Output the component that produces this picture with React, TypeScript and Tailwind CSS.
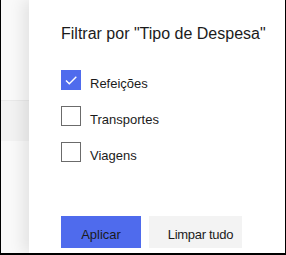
import React, { useState } from 'react';

const options = ['Refeições', 'Transportes', 'Viagens'];

function Checkbox({ checked }: { checked: boolean }) {
    return checked ? (
        <div className="w-[20px] h-[20px] bg-[#4f6bed] flex items-center justify-center shrink-0">
            <svg width="20" height="20" viewBox="0 0 20 20" fill="none">
                <path d="M5 10.5 L8.3 13.8 L15.3 6.8" stroke="white" strokeWidth="1.4" />
            </svg>
        </div>
    ) : (
        <div className="w-[20px] h-[20px] border border-[#6b6b6b] bg-white shrink-0" />
    );
}

export default function App() {
    const [selected, setSelected] = useState<string[]>(['Refeições']);

    const toggle = (name: string) =>
        setSelected((s) => (s.includes(name) ? s.filter((x) => x !== name) : [...s, name]));

    return (
        <div
            className="w-[286px] h-[255px] flex border-l border-r border-b-2 border-black bg-white text-[#1b1b1b]"
            style={{ fontFamily: '"Liberation Sans", Arial, sans-serif' }}
        >
            {/* page behind the panel */}
            <div className="w-[28px] flex flex-col bg-[#f9f9f9]">
                <div className="h-[100px]" />
                <div className="h-[41px] bg-[#f2f2f2] border-t border-[#e9e9e9]" />
                <div className="flex-1" />
            </div>

            {/* filter panel */}
            <div className="relative z-10 flex-1 flex flex-col bg-white pl-[32px] pt-[24px] shadow-[-6px_0_14px_rgba(0,0,0,0.09)]">
                <h2 className="h-[20px] text-[16px] leading-[20px] font-normal whitespace-nowrap">
                    Filtrar por "Tipo de Despesa"
                </h2>

                <div className="mt-[26px] flex flex-col gap-[16px]">
                    {options.map((name) => (
                        <button
                            key={name}
                            onClick={() => toggle(name)}
                            className="h-[20px] flex items-start gap-[9px] text-left"
                        >
                            <Checkbox checked={selected.includes(name)} />
                            <span className="h-[20px] text-[13px] leading-[20px] translate-y-[4px]">{name}</span>
                        </button>
                    ))}
                </div>

                <div className="mt-[54px] flex gap-[8px]">
                    <button className="w-[80px] h-[32px] bg-[#4f6bed] text-[13px] leading-[27px] pt-[5px] text-center">
                        Aplicar
                    </button>
                    <button className="w-[93px] h-[32px] bg-[#f3f3f3] text-[13px] leading-[27px] pt-[5px] pl-[10px] text-center tracking-[-0.3px]">
                        Limpar tudo
                    </button>
                </div>
            </div>
        </div>
    );
}
